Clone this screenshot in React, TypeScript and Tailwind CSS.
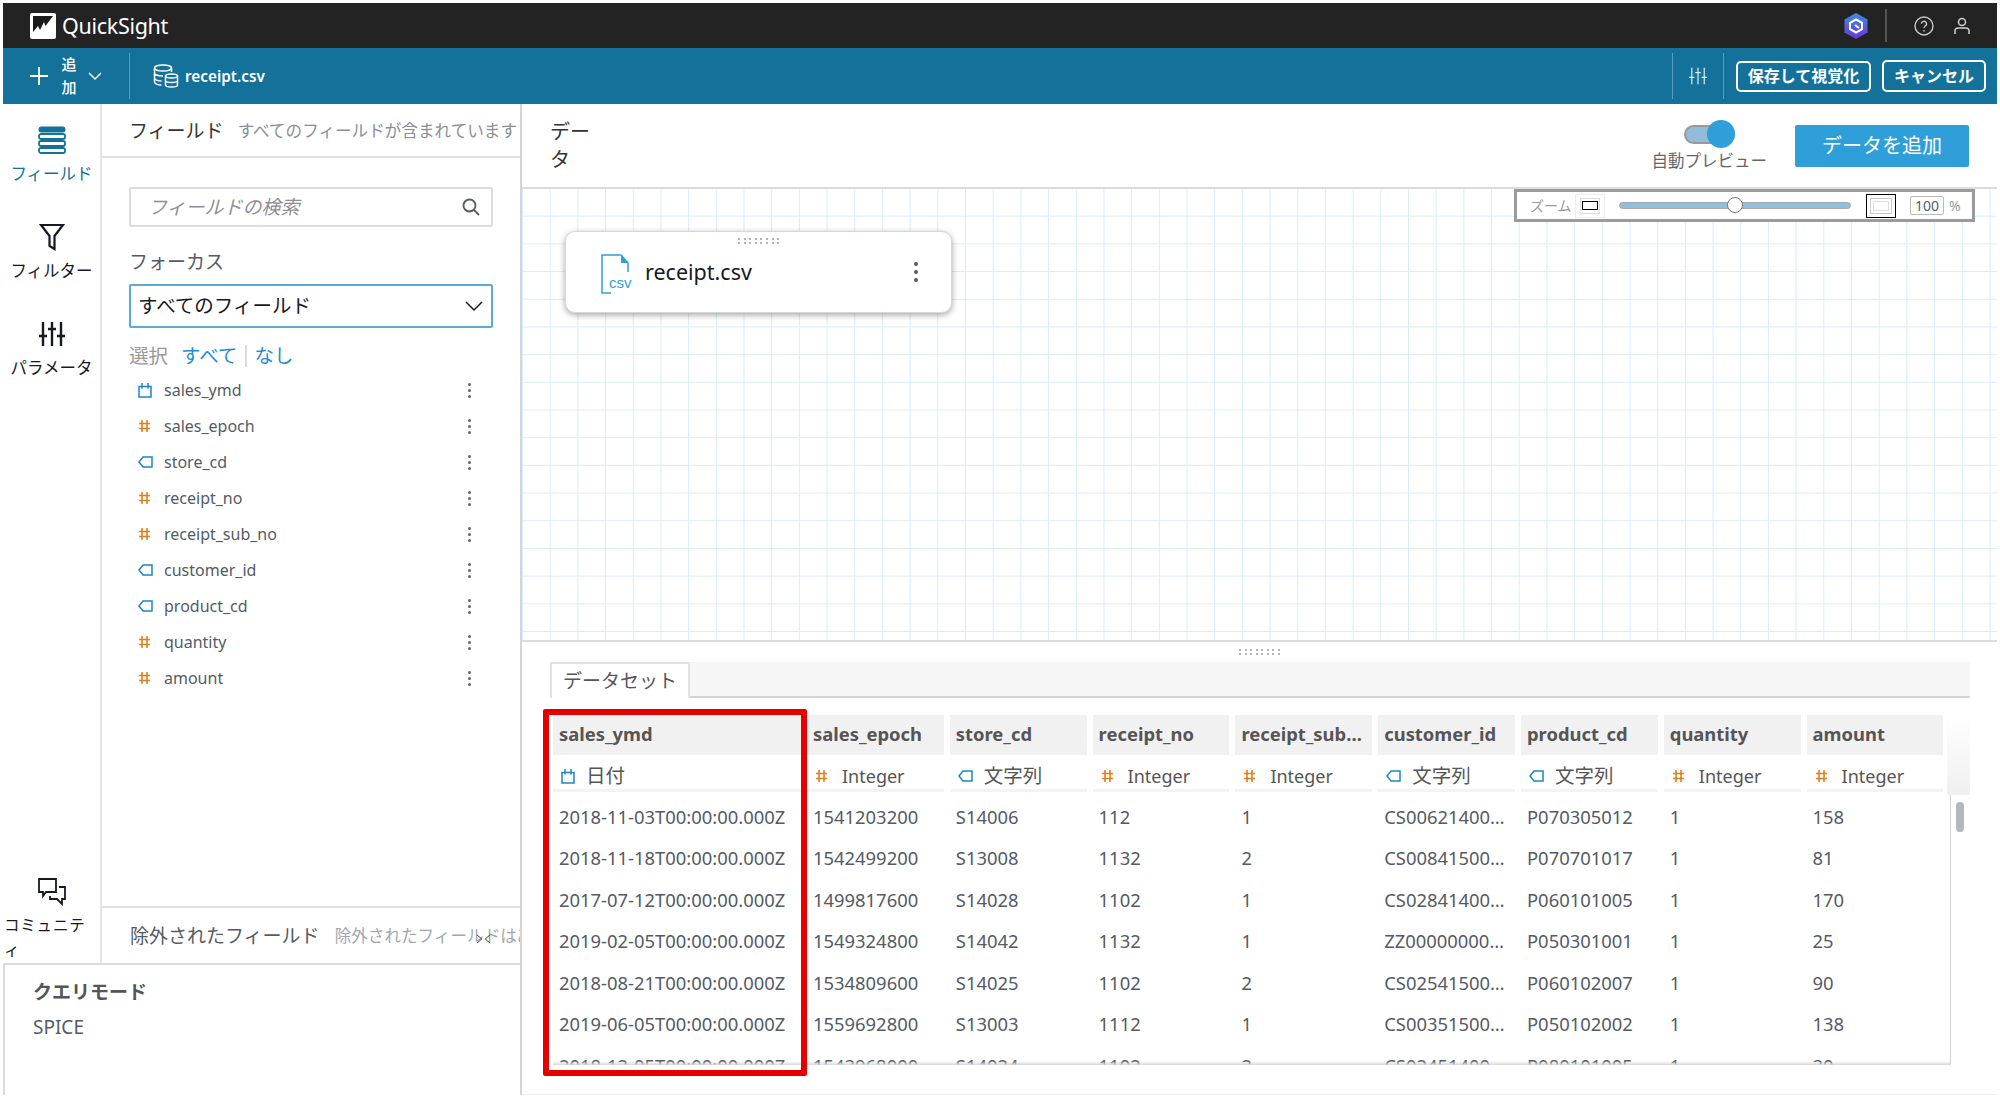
const font = { fontFamily: '"Noto Sans", "Noto Sans CJK JP", sans-serif' };

const fields: { name: string; kind: "date" | "num" | "tag" }[] = [
  { name: "sales_ymd", kind: "date" },
  { name: "sales_epoch", kind: "num" },
  { name: "store_cd", kind: "tag" },
  { name: "receipt_no", kind: "num" },
  { name: "receipt_sub_no", kind: "num" },
  { name: "customer_id", kind: "tag" },
  { name: "product_cd", kind: "tag" },
  { name: "quantity", kind: "num" },
  { name: "amount", kind: "num" },
];

const columns = [
  { title: "sales_ymd", kind: "date", type: "日付", wide: true, rows: ["2018-11-03T00:00:00.000Z", "2018-11-18T00:00:00.000Z", "2017-07-12T00:00:00.000Z", "2019-02-05T00:00:00.000Z", "2018-08-21T00:00:00.000Z", "2019-06-05T00:00:00.000Z", "2018-12-05T00:00:00.000Z"] },
  { title: "sales_epoch", kind: "num", type: "Integer", rows: ["1541203200", "1542499200", "1499817600", "1549324800", "1534809600", "1559692800", "1543968000"] },
  { title: "store_cd", kind: "tag", type: "文字列", rows: ["S14006", "S13008", "S14028", "S14042", "S14025", "S13003", "S14024"] },
  { title: "receipt_no", kind: "num", type: "Integer", rows: ["112", "1132", "1102", "1132", "1102", "1112", "1102"] },
  { title: "receipt_sub…", kind: "num", type: "Integer", rows: ["1", "2", "1", "1", "2", "1", "2"] },
  { title: "customer_id", kind: "tag", type: "文字列", rows: ["CS00621400…", "CS00841500…", "CS02841400…", "ZZ00000000…", "CS02541500…", "CS00351500…", "CS02451400…"] },
  { title: "product_cd", kind: "tag", type: "文字列", rows: ["P070305012", "P070701017", "P060101005", "P050301001", "P060102007", "P050102002", "P080101005"] },
  { title: "quantity", kind: "num", type: "Integer", rows: ["1", "1", "1", "1", "1", "1", "1"] },
  { title: "amount", kind: "num", type: "Integer", rows: ["158", "81", "170", "25", "90", "138", "30"] },
];

function KindIcon({ kind }: { kind: string }) {
  if (kind === "date") {
    return (
      <svg width="14" height="15" viewBox="0 0 14 15" fill="none" stroke="#1c87bf" strokeWidth="1.5">
        <path d="M1 3.500h12V14H1z" />
        <path d="M4 0v5.500M10 0v5.500" />
      </svg>
    );
  }
  if (kind === "num") {
    return (
      <svg width="13" height="14" viewBox="0 0 13 14" fill="none" stroke="#e07f1f" strokeWidth="1.6">
        <path d="M4 1v12M9 1v12M1 4.500h11M1 9.500h11" />
      </svg>
    );
  }
  return (
    <svg width="15" height="12" viewBox="0 0 15 12" fill="none" stroke="#1c87bf" strokeWidth="1.5">
      <path d="M14 1H5L1 6l4 5h9z" />
    </svg>
  );
}

function Kebab({ big = false }: { big?: boolean }) {
  const c = big ? "w-[4px] h-[4px] bg-[#545b64]" : "w-[3px] h-[3px] bg-[#666]";
  return (
    <div className={big ? "flex flex-col gap-[4px]" : "flex flex-col gap-[3px]"}>
      <span className={`rounded-full ${c}`} />
      <span className={`rounded-full ${c}`} />
      <span className={`rounded-full ${c}`} />
    </div>
  );
}

function Grip() {
  return (
    <div className="grid grid-cols-[repeat(8,2px)] gap-x-[3.600px] gap-y-[2px]">
      {Array.from({ length: 16 }).map((_, i) => (
        <span key={i} className="w-[2px] h-[2px] bg-[#b4b4b4]" />
      ))}
    </div>
  );
}

function SlidersIcon({ size, color, sw }: { size: number; color: string; sw: number }) {
  return (
    <svg width={size} height={size} viewBox="0 0 26 26" fill="none" stroke={color} strokeWidth={sw}>
      <path d="M4 1v24M13 1v24M22 1v24" />
      <path d="M0 15h8M9 8h8M18 15h8" />
    </svg>
  );
}

export default function App() {
  return (
    <div style={font} className="w-[2000px] h-[1098px] bg-white p-[3px] flex flex-col overflow-hidden text-[#545b64]">
      {/* top black bar */}
      <div className="h-[45px] shrink-0 bg-[#232323] flex items-center pl-[26px] pr-[27px] text-white">
        <svg width="28" height="28" viewBox="0 0 28 28" className="mr-[5px]">
          <rect x="1" y="1" width="26" height="26" rx="2" fill="#fff" />
          <path d="M4 4h20L16.500 14l-1.500-4-4 8-2-4-5 6z" fill="#1b1b1b" />
        </svg>
        <span className="text-[21.500px] leading-none tracking-[-0.3px]">QuickSight</span>
        <div className="ml-auto flex items-center">
          <svg width="24" height="26" viewBox="0 0 24 26" className="mr-[17px]">
            <defs>
              <linearGradient id="hex" x1="0" y1="0" x2="0" y2="1">
                <stop offset="0" stopColor="#3d8fe0" />
                <stop offset="1" stopColor="#6a35d8" />
              </linearGradient>
            </defs>
            <path d="M12 0l11.500 6.500v13L12 26 .5 19.500v-13z" fill="url(#hex)" />
            <path d="M12 6.500l6 3.300v6.400l-6 3.300-6-3.300V9.800z" fill="none" stroke="#fff" strokeWidth="2" />
            <path d="M11 12l4 3" stroke="#fff" strokeWidth="2" />
          </svg>
          <div className="w-[2px] h-[33px] bg-[#555] mr-[27px]" />
          <svg width="20" height="20" viewBox="0 0 20 20" fill="none" stroke="#c8c8c8" strokeWidth="1.4" className="mr-[20px]">
            <circle cx="10" cy="10" r="9" />
            <path d="M7.500 7.800a2.500 2.500 0 1 1 3.700 2.200c-.8.500-1.200 1-1.200 2" />
            <path d="M10 14v1.400" />
          </svg>
          <svg width="16" height="18" viewBox="0 0 16 18" fill="none" stroke="#d0d0d0" strokeWidth="1.5">
            <circle cx="8" cy="5" r="3.500" />
            <path d="M1 17v-3c0-2 1.500-3 3.500-3h7c2 0 3.500 1 3.500 3v3" />
          </svg>
        </div>
      </div>

      {/* teal toolbar */}
      <div className="h-[56px] shrink-0 bg-[#14719a] flex items-center text-white">
        <div className="flex items-center pl-[27px] w-[126px]">
          <svg width="18" height="18" viewBox="0 0 18 18" stroke="#fff" strokeWidth="1.8">
            <path d="M9 0v18M0 9h18" />
          </svg>
          <div className="w-[16px] ml-[13px] text-[15px] leading-[23px] font-medium text-center">追加</div>
          <svg width="14" height="9" viewBox="0 0 14 9" fill="none" stroke="#fff" strokeWidth="1.500" className="ml-[11px]">
            <path d="M1 1l6 6 6-6" />
          </svg>
        </div>
        <div className="w-px h-[46px] bg-[#5d9dba]" />
        <svg width="26" height="24" viewBox="0 0 26 24" fill="none" stroke="#fff" strokeWidth="1.500" className="ml-[23px] mr-[6px]">
          <ellipse cx="10" cy="4" rx="8.500" ry="3" />
          <path d="M1.500 4v14c0 1.500 3 3 7 3M18.500 4v4M1.500 9c0 1.500 3 3 8.500 3M1.500 14c0 1.500 3 3 7 3" />
          <ellipse cx="18.500" cy="12" rx="6" ry="2" />
          <path d="M12.500 12v9c0 1.200 2.500 2 6 2s6-.8 6-2v-9M12.500 16.500c0 1.200 2.500 2 6 2s6-.8 6-2" />
        </svg>
        <span className="text-[15.300px] font-semibold pt-[1px]">receipt.csv</span>
        <div className="ml-auto flex items-center">
          <div className="w-px h-[46px] bg-[#5d9dba]" />
          <div className="w-[50px] flex justify-center">
            <SlidersIcon size={18} color="#dbe9f0" sw={1.8} />
          </div>
          <div className="w-px h-[46px] bg-[#5d9dba]" />
          <button className="ml-[12px] w-[135px] h-[31px] rounded-[5px] border-2 border-white text-[16px] font-semibold leading-none whitespace-nowrap">保存して視覚化</button>
          <button className="ml-[11px] mr-[11px] w-[104px] h-[32px] rounded-[5px] border-2 border-white text-[16px] font-semibold leading-none whitespace-nowrap">キャンセル</button>
        </div>
      </div>

      {/* body */}
      <div className="flex-1 flex min-h-0">
        {/* left column */}
        <div className="w-[519px] shrink-0 flex flex-col border-r-2 border-[#d5d5d5]">
          <div className="flex-1 flex min-h-0">
            {/* rail */}
            <div className="w-[99px] shrink-0 border-r-2 border-[#e4e4e4] flex flex-col items-center text-[16.500px] text-[#16191f]">
              <svg width="28" height="28" viewBox="0 0 28 28" className="mt-[22px]" fill="none" stroke="#14719a">
                <rect x="1" y="1" width="26" height="5" rx="2" fill="#14719a" strokeWidth="1" />
                <rect x="1" y="8" width="26" height="5" rx="2" strokeWidth="1.800" />
                <rect x="1" y="15" width="26" height="5" rx="2" strokeWidth="1.800" />
                <rect x="1" y="22" width="26" height="5" rx="2" strokeWidth="1.800" />
              </svg>
              <span className="mt-[9px] leading-[22px] text-[#14719a] whitespace-nowrap">フィールド</span>
              <svg width="26" height="28" viewBox="0 0 26 28" fill="none" stroke="#16191f" strokeWidth="2.200" className="mt-[38px]">
                <path d="M2 2h22l-8.500 11v13l-5-3V13z" />
              </svg>
              <span className="mt-[9px] leading-[22px] whitespace-nowrap">フィルター</span>
              <div className="mt-[39px]">
                <SlidersIcon size={26} color="#16191f" sw={2.400} />
              </div>
              <span className="mt-[10px] leading-[22px] whitespace-nowrap">パラメータ</span>
              <svg width="28" height="28" viewBox="0 0 28 28" fill="none" stroke="#16191f" strokeWidth="1.800" className="mt-auto mb-[7px]">
                <path d="M1 1h17v13H8l-3 4v-4H1z" />
                <path d="M21 9h6v12h-3v5l-5-5h-7v-3" />
              </svg>
              <div className="w-[90px] self-start pl-[1px] text-[15.500px] leading-[25px] tracking-[0.8px] break-all">コミュニティ</div>
            </div>

            {/* field panel */}
            <div className="flex-1 flex flex-col min-w-0">
              <div className="h-[54px] shrink-0 border-b-2 border-[#e1e1e1] flex items-center pl-[27px] pt-[2px] whitespace-nowrap overflow-hidden">
                <span className="text-[19px] text-[#333] mr-[14px]">フィールド</span>
                <span className="text-[16.600px] text-[#8a8f96]">すべてのフィールドが含まれています</span>
              </div>
              <div className="pl-[27px] pr-[27px] flex-1 flex flex-col">
                <div className="mt-[29px] h-[40px] border-2 border-[#dddddd] rounded-[2px] flex items-center pl-[17px] pr-[11px]">
                  <span className="text-[19px] italic text-[#8f8f8f]">フィールドの検索</span>
                  <svg width="18" height="18" viewBox="0 0 18 18" fill="none" stroke="#545b64" strokeWidth="1.800" className="ml-auto">
                    <circle cx="7.500" cy="7.500" r="6" />
                    <path d="M12 12l5 5" />
                  </svg>
                </div>
                <div className="mt-[22px] text-[19px] leading-[26px] text-[#545b64]">フォーカス</div>
                <div className="mt-[9px] h-[44px] border-2 border-[#5ba9d6] rounded-[2px] flex items-center pl-[7px] pr-[8px]">
                  <span className="text-[19.500px] text-[#16191f]">すべてのフィールド</span>
                  <svg width="18" height="11" viewBox="0 0 18 11" fill="none" stroke="#16191f" strokeWidth="1.500" className="ml-auto">
                    <path d="M1 1l8 8 8-8" />
                  </svg>
                </div>
                <div className="mt-[15px] flex items-center text-[19.500px] leading-[26px]">
                  <span className="text-[#999]">選択</span>
                  <span className="ml-[13px] text-[#1f8ece]">すべて</span>
                  <span className="mx-[8px] w-[2px] h-[22px] bg-[#dcdcdc]" />
                  <span className="text-[#1f8ece] -ml-[1px]">なし</span>
                </div>
                <div className="mt-[3px]">
                  {fields.map((f) => (
                    <div key={f.name} className="h-[36px] flex items-center text-[16px] text-[#545b64]">
                      <div className="w-[35px] pl-[9px] flex items-center">
                        <KindIcon kind={f.kind} />
                      </div>
                      <span>{f.name}</span>
                      <div className="ml-auto mr-[22px]">
                        <Kebab />
                      </div>
                    </div>
                  ))}
                </div>
              </div>
              <div className="h-[57px] shrink-0 border-t-2 border-[#e1e1e1] flex items-center pl-[28px] pt-[2px] whitespace-nowrap overflow-hidden relative">
                <span className="text-[19px] mr-[15px]">除外されたフィールド</span>
                <span className="text-[16.600px] text-[#a3a7ad]">除外されたフィールドはありません</span>
                <svg width="15" height="10" viewBox="0 0 18 12" fill="none" stroke="#444" strokeWidth="1.200" className="absolute left-[374px] top-[26px]">
                  <path d="M1 1l6 5-6 5M17 1l-6 5 6 5" />
                </svg>
              </div>
            </div>
          </div>
          <div className="h-[132px] shrink-0 border-t-2 border-l-2 border-[#dcdcdc] pl-[28px] pt-[13px]">
            <div className="text-[19px] font-bold leading-[28px] text-[#555]">クエリモード</div>
            <div className="mt-[8px] text-[19px] leading-[26px] text-[#545b64]">SPICE</div>
          </div>
        </div>

        {/* right column */}
        <div className="flex-1 flex flex-col min-w-0">
          <div className="h-[85px] shrink-0 border-b-2 border-[#dcdcdc] flex pl-[28px] pr-[28px]">
            <div className="w-[42px] mt-[14px] text-[20px] leading-[28px] text-[#333]">データ</div>
            <div className="ml-auto flex flex-col items-center mr-[28px] mt-[21px]">
              <div className="w-[51px] h-[19px] rounded-full bg-[#93bcd8] border-2 border-[#9a9a9a] relative">
                <div className="absolute right-[-2px] top-[-7px] w-[28px] h-[28px] rounded-full bg-[#2e9fd9]" />
              </div>
              <span className="mt-[6px] text-[16.500px] leading-[22px] text-[#666] whitespace-nowrap">自動プレビュー</span>
            </div>
            <button className="mt-[21px] w-[174px] h-[42px] bg-[#2e9fd9] rounded-[2px] text-white text-[20px] leading-none">データを追加</button>
          </div>

          {/* canvas */}
          <div className="h-[453px] shrink-0 border-b-2 border-[#dcdcdc] relative pl-[43px] pt-[42px] bg-[linear-gradient(#d9edf8_1.4px,transparent_1.4px),linear-gradient(90deg,#d9edf8_1.4px,transparent_1.4px)] bg-[size:27.7px_27.7px] bg-[position:0_-1px]">
            <div className="w-[387px] h-[82px] bg-white rounded-[10px] border border-[#d8d8d8] shadow-[0_2px_6px_rgba(0,0,0,0.35)] relative flex items-center pl-[35px] pr-[33px]">
              <div className="absolute left-[172px] top-[6px]">
                <Grip />
              </div>
              <svg width="32" height="40" viewBox="0 0 32 40" fill="none" className="mt-[4px]">
                <path d="M10 39H1V1h19l7 8v9" stroke="#2e9fd9" strokeWidth="1.500" />
                <path d="M20 1l7 8h-7z" fill="#2e9fd9" />
                <text x="8" y="34" fontSize="15" fill="#2e9fd9" fontFamily="Liberation Sans, sans-serif">csv</text>
              </svg>
              <span className="ml-[12px] text-[21.500px] text-[#16191f]">receipt.csv</span>
              <div className="ml-auto">
                <Kebab big />
              </div>
            </div>
            {/* zoom control */}
            <div className="absolute left-[992px] top-[0px] w-[461px] h-[33px] bg-white border-[3px] border-[#9b9b9b] flex items-center pl-[13px] text-[14px] text-[#999]">
              <span className="w-[38px] whitespace-nowrap">ズーム</span>
              <div className="ml-[7px] w-[30px] h-[24px] border border-[#eee] flex items-center justify-center">
                <div className="w-[20px] h-[16px] border border-[#ddd] flex items-center justify-center">
                  <div className="w-[16px] h-[9px] border border-black" />
                </div>
              </div>
              <div className="ml-[14px] w-[232px] h-[7px] rounded-full bg-[#8fbfde] border border-[#aaa] relative">
                <div className="absolute left-[107px] top-[-6px] w-[16px] h-[16px] rounded-full bg-white border border-[#777]" />
              </div>
              <div className="ml-[15px] w-[30px] h-[24px] border border-black flex items-center justify-center">
                <div className="w-[22px] h-[16px] border border-[#ccc] flex items-center justify-center">
                  <div className="w-[16px] h-[10px] border border-[#ddd]" />
                </div>
              </div>
              <div className="ml-[14px] w-[34px] h-[19px] border border-[#bbb] rounded-[2px] text-[#545b64] flex items-center justify-center leading-none">100</div>
              <span className="ml-[5px] text-[14px]">%</span>
            </div>
          </div>

          {/* dataset panel */}
          <div className="flex-1 min-h-0 relative flex flex-col border-b border-[#eeeeee]">
            <div className="h-[20px] shrink-0 flex justify-center items-center">
              <Grip />
            </div>
            <div className="h-[36px] shrink-0 ml-[28px] mr-[27px] bg-[#f6f6f6] border-b-2 border-[#d5d5d5] flex">
              <div className="w-[140px] h-[36px] bg-white border-l-2 border-t-2 border-r-2 border-[#e2e2e2] flex items-center pl-[11px] text-[19px] text-[#555]">データセット</div>
            </div>
            <div className="ml-[31px] mr-[27px] mt-[17px] h-[350px] relative overflow-hidden">
              <div className="flex gap-[6px] h-full">
                {columns.map((col) => (
                  <div key={col.title} className={col.wide ? "w-[248px] shrink-0" : "w-[136.800px] shrink-0"}>
                    <div className="h-[40px] bg-[#f1f1f1] flex items-center pl-[6px] pb-[2px] text-[18.400px] font-bold text-[#555] whitespace-nowrap overflow-hidden">{col.title}</div>
                    <div className="h-[37px] border-b-[3px] border-[#f3f3f3] flex items-center pl-[8px] pt-[8px] text-[#555]">
                      <KindIcon kind={col.kind} />
                      <span className={col.kind === "num" ? "ml-[14px] text-[18px]" : "ml-[11px] text-[19.500px]"}>{col.type}</span>
                    </div>
                    <div className="pt-[4px]">
                      {col.rows.map((v, i) => (
                        <div key={i} className="h-[41.500px] flex items-center pl-[6px] text-[18.400px] text-[#545b64] whitespace-nowrap">{v}</div>
                      ))}
                    </div>
                  </div>
                ))}
              </div>
              {/* scroll track */}
              <div className="absolute right-0 top-0 w-[23px] h-[80px] bg-gradient-to-b from-white to-[#f0f0f0]" />
              <div className="absolute right-[19px] top-[80px] bottom-0 w-px bg-[#d0d0d0]" />
              <div className="absolute right-[6px] top-[87px] w-[8px] h-[30px] rounded-full bg-[#b3b8bd]" />
              <div className="absolute left-0 right-[19px] bottom-0 h-[4px] bg-gradient-to-b from-transparent to-[#d8d8d8]" />
            </div>
            {/* highlight round the first column */}
            <div className="absolute left-[21px] top-[67px] w-[264px] h-[367px] border-[6px] border-[#e60000] rounded-[2px]" />
          </div>
        </div>
      </div>
    </div>
  );
}
